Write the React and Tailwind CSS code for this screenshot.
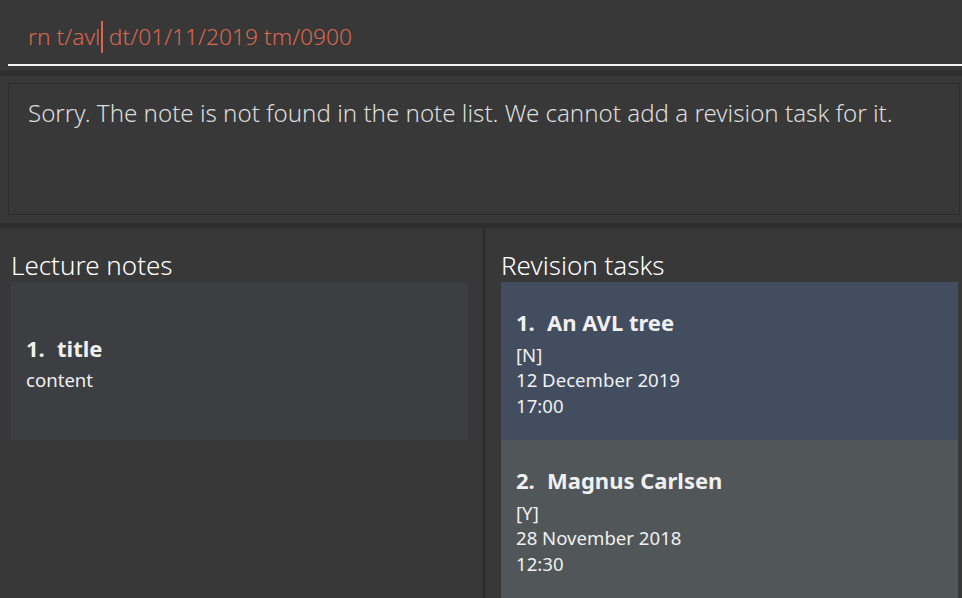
import React from "react";

const font = { fontFamily: '"Noto Sans", "Open Sans", sans-serif' };

function Task({ n, title, done, date, time, bg }) {
  return (
    <div className={`h-[158px] shrink-0 flex flex-col justify-center pl-[15px] pt-[4px] ${bg}`}>
      <div className="flex items-center text-[22px] font-bold text-[#f0f0f0] leading-[28px]">
        <span className="w-[26px]">{n}.</span>
        <span className="ml-[5px]">{title}</span>
      </div>
      <div className="mt-[6px] text-[18.6px] text-[#f0f0f0] leading-[25.5px]">
        <div>{done}</div>
        <div>{date}</div>
        <div>{time}</div>
      </div>
    </div>
  );
}

export default function App() {
  return (
    <div className="w-[962px] h-[598px] bg-[#383838] flex flex-col overflow-hidden" style={font}>
      {/* command box */}
      <div className="h-[70px] shrink-0 pl-[8px] pt-[20px]">
        <div className="h-[44px] pl-[20px] flex items-start text-[22.8px] font-light text-[#d9674e] leading-[34px] whitespace-pre">
          <span>rn t/avl</span>
          <span className="inline-block w-[1.5px] h-[32px] bg-[#d9674e] mt-[1px] ml-[1px]" />
          <span> dt/01/11/2019 tm/0900</span>
        </div>
        <div className="h-[2px] bg-[#f4f4f4]" />
      </div>
      <div className="h-[6px] shrink-0 bg-[#2e2e2e] border-t border-[#333]" />
      {/* result box */}
      <div className="h-[147px] shrink-0 px-[8px] pt-[7px] pb-[7px] pr-[2px]">
        <div className="h-[132px] border border-[#2c2c2c] pl-[19px] pt-[13px] text-[24.1px] font-light text-[#dcdcdc] leading-[32px]">
          Sorry. The note is not found in the note list. We cannot add a revision task for it.
        </div>
      </div>
      <div className="h-[6px] shrink-0 bg-[#2e2e2e] border-b border-[#333]" />
      {/* bottom split */}
      <div className="flex-1 flex min-h-0">
        <div className="w-[482px] shrink-0 flex flex-col pl-[11px] pr-[14px]">
          <div className="h-[53px] shrink-0 flex items-end text-[26px] font-light text-white leading-[34px]">
            Lecture notes
          </div>
          <div className="h-[158px] bg-[#3c3e41] flex flex-col justify-center pl-[15px] pt-[4px]">
            <div className="flex items-center text-[22px] font-bold text-[#f0f0f0] leading-[28px]">
              <span className="w-[26px]">1.</span>
              <span className="ml-[5px]">title</span>
            </div>
            <div className="mt-[5px] text-[18.6px] text-[#f0f0f0] leading-[25px]">content</div>
          </div>
        </div>
        <div className="w-[4px] shrink-0 bg-[#2c2c2c] border-x border-[#333]" />
        <div className="flex-1 flex flex-col pl-[15px] pr-[4px] min-w-0">
          <div className="h-[53px] shrink-0 flex items-end text-[26px] font-light text-white leading-[34px]">
            Revision tasks
          </div>
          <Task n="1" title="An AVL tree" done="[N]" date="12 December 2019" time="17:00" bg="bg-[#424d5f]" />
          <Task n="2" title="Magnus Carlsen" done="[Y]" date="28 November 2018" time="12:30" bg="bg-[#515658]" />
        </div>
      </div>
    </div>
  );
}
